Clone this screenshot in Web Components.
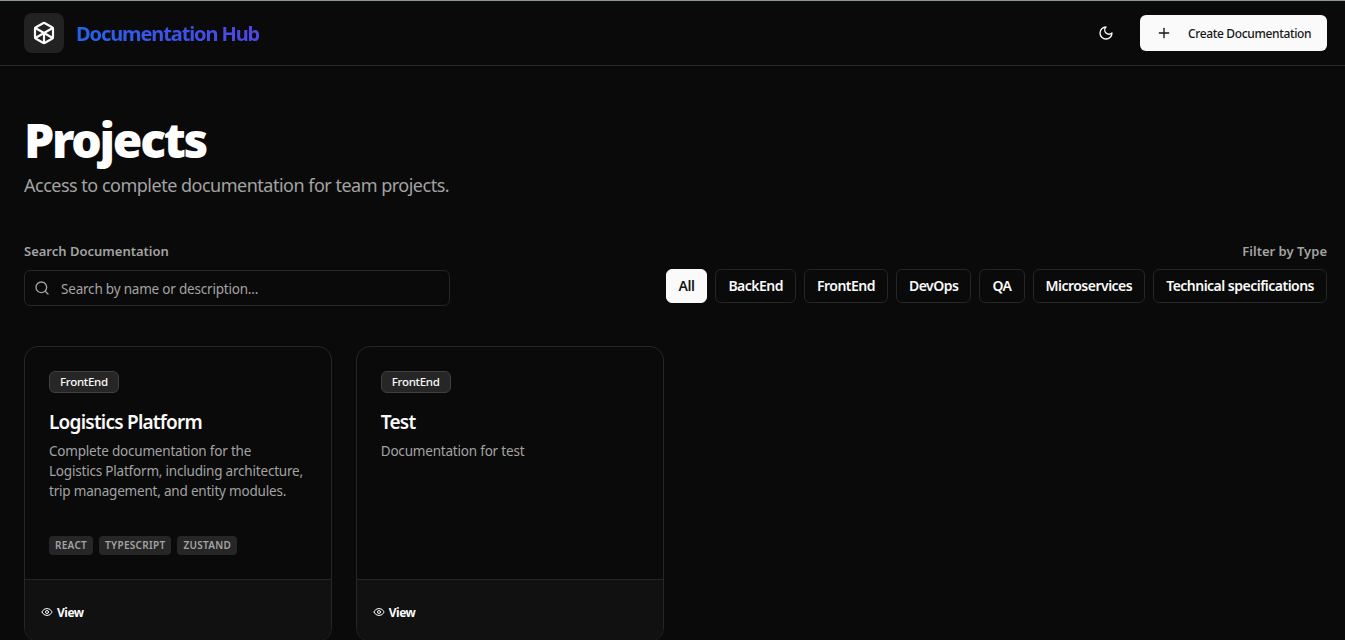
<!DOCTYPE html>
<html><head><meta charset="utf-8">
<style>
html,body{margin:0;background:#0a0a0a;height:100%;overflow:hidden}
body{font-family:"Noto Sans","Open Sans",sans-serif;color:#fafafa;border-top:1px solid #8a9a94;box-sizing:border-box}
</style></head><body>
<hub-header></hub-header>
<hub-main></hub-main>
<script>
const I={
box:'<path d="M21 8a2 2 0 0 0-1-1.73l-7-4a2 2 0 0 0-2 0l-7 4A2 2 0 0 0 3 8v8a2 2 0 0 0 1 1.73l7 4a2 2 0 0 0 2 0l7-4A2 2 0 0 0 21 16Z"/><path d="m3.3 7 8.7 5 8.7-5"/><path d="M12 22V12"/><path d="m3.3 17 8.7-5 8.7 5"/>',
moon:'<path d="M12 3a6 6 0 0 0 9 9 9 9 0 1 1-9-9Z"/>',
plus:'<path d="M5 12h14"/><path d="M12 5v14"/>',
search:'<circle cx="11" cy="11" r="8"/><path d="m21 21-4.3-4.3"/>',
eye:'<path d="M2.06 12.35a1 1 0 0 1 0-.7 10.75 10.75 0 0 1 19.88 0 1 1 0 0 1 0 .7 10.75 10.75 0 0 1-19.88 0"/><circle cx="12" cy="12" r="3"/>'};
function def(name,html,init){customElements.define(name,class extends HTMLElement{constructor(){super();this.attachShadow({mode:'open'});}connectedCallback(){this.shadowRoot.innerHTML=typeof html==='function'?html(this):html;}});}
const ic=(n,s,w=2)=>`<svg width="${s}" height="${s}" viewBox="0 0 24 24" fill="none" stroke="currentColor" stroke-width="${w}" stroke-linecap="round" stroke-linejoin="round" style="display:block;flex:none">${I[n]}</svg>`;

def('hub-header',`<style>
:host{display:flex;align-items:center;justify-content:space-between;height:64px;padding:0 18px 0 24px;border-bottom:1px solid #262626}
.l{display:flex;align-items:center;gap:12px}
.logo{width:40px;height:40px;border-radius:8px;background:#222;display:flex;align-items:center;justify-content:center;color:#fafafa}
.t{font-size:20px;font-weight:700;letter-spacing:-1.1px;background:linear-gradient(90deg,#2563eb,#4f46e5);-webkit-background-clip:text;background-clip:text;color:transparent}
.r{display:flex;align-items:center;gap:16px}
.th{width:36px;height:36px;display:flex;align-items:center;justify-content:center;color:#fafafa}
.b{display:flex;align-items:center;width:187px;height:36px;box-sizing:border-box;padding-left:16px;background:#fafafa;color:#171717;border-radius:6px;font-size:12px;font-weight:500;letter-spacing:-.35px}
.b svg{margin-right:16px}
</style>
<div class="l"><div class="logo">${ic('box',24,2.2)}</div><span class="t">Documentation Hub</span></div>
<div class="r"><div class="th">${ic('moon',16)}</div><div class="b">${ic('plus',16)}<span>Create Documentation</span></div></div>`);

def('hub-filter',h=>`<style>
:host{display:inline-flex;align-items:center;height:34px;box-sizing:border-box;padding:0 12px 1px;border:1px solid #262626;border-radius:6px;font-size:14px;font-weight:600;letter-spacing:-.515px;color:#fafafa;background:#0a0a0a;white-space:nowrap}
:host([active]){background:#fafafa;color:#171717;border-color:#fafafa}
</style><slot></slot>`);

def('hub-tech',`<style>
:host{display:inline-flex;align-items:center;height:19px;box-sizing:border-box;padding:0 6px 1px;border-radius:4px;background:#262626;color:#a3a3a3;font-size:10px;font-weight:600;letter-spacing:.3px;text-transform:uppercase}
</style><slot></slot>`);

def('hub-card',h=>`<style>
:host{display:flex;flex-direction:column;height:296px;box-sizing:border-box;border:1px solid #262626;border-radius:14px;overflow:hidden;background:#0a0a0a}
.body{padding:24px 24px 0;display:flex;flex-direction:column}
.badge{align-self:flex-start;display:flex;align-items:center;height:22px;box-sizing:border-box;padding:0 10px 1px;border:1px solid #404040;border-radius:6px;background:#262626;font-size:11.5px;font-weight:500;letter-spacing:-.28px;color:#fafafa}
h3{margin:16px 0 0;font-size:19px;line-height:26px;font-weight:600;letter-spacing:-.77px;color:#fafafa}
p{margin:6px 0 0;font-size:13.5px;line-height:20px;color:#a3a3a3;letter-spacing:-.2px;height:79px}
.tags{display:flex;gap:6px;margin-top:16px;height:19px}
.foot{flex:1;margin-top:24px;border-top:1px solid #262626;background:#111;display:flex;align-items:center;gap:4px;padding:3px 16px 0;font-size:12px;font-weight:700;letter-spacing:-.5px;color:#fafafa}
</style>
<div class="body"><div class="badge">${h.getAttribute('type')}</div><h3>${h.getAttribute('name')}</h3><p><slot></slot></p><div class="tags"><slot name="tags"></slot></div></div>
<div class="foot">${ic('eye',12)}<span>View</span></div>`);

def('hub-main',`<style>
:host{display:block;padding:48px 18px 0 24px}
h1{margin:0;font-size:48px;line-height:52px;font-weight:900;letter-spacing:-2.3px;color:#fff}
.sub{margin:5px 0 0;font-size:18px;line-height:28px;color:#a3a3a3;letter-spacing:-.5px}
.bar{display:flex;justify-content:space-between;align-items:flex-start;margin-top:42px}
.lab{font-size:13px;line-height:20px;font-weight:600;color:#a3a3a3;letter-spacing:0}
.s{display:flex;align-items:center;width:426px;height:36px;box-sizing:border-box;margin-top:9px;padding-left:9px;border:1px solid #262626;border-radius:6px;color:#a3a3a3;font-size:13.5px;letter-spacing:-.2px}
.s svg{margin-right:11px}
.s span{padding-top:2px}
.f{display:flex;flex-direction:column;align-items:flex-end}
.chips{display:flex;gap:8px;margin-top:8px}
.grid{display:grid;grid-template-columns:repeat(4,1fr);gap:24px;margin-top:40px}
</style>
<h1>Projects</h1><div class="sub">Access to complete documentation for team projects.</div>
<div class="bar"><div><div class="lab">Search Documentation</div><div class="s">${ic('search',16)}<span>Search by name or description...</span></div></div>
<div class="f"><div class="lab">Filter by Type</div><div class="chips"><hub-filter active>All</hub-filter><hub-filter>BackEnd</hub-filter><hub-filter>FrontEnd</hub-filter><hub-filter>DevOps</hub-filter><hub-filter>QA</hub-filter><hub-filter>Microservices</hub-filter><hub-filter>Technical specifications</hub-filter></div></div></div>
<div class="grid">
<hub-card type="FrontEnd" name="Logistics Platform">Complete documentation for the Logistics Platform, including architecture, trip management, and entity modules.<hub-tech slot="tags">React</hub-tech><hub-tech slot="tags">TypeScript</hub-tech><hub-tech slot="tags">Zustand</hub-tech></hub-card>
<hub-card type="FrontEnd" name="Test">Documentation for test</hub-card>
</div>`);
</script></body></html>
